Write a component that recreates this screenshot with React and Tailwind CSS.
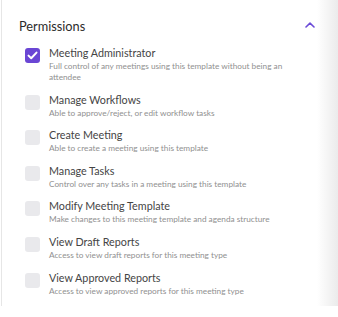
import React from "react";

const items = [
  { title: "Meeting Administrator", desc: "Full control of any meetings using this template without being an attendee", checked: true },
  { title: "Manage Workflows", desc: "Able to approve/reject, or edit workflow tasks" },
  { title: "Create Meeting", desc: "Able to create a meeting using this template" },
  { title: "Manage Tasks", desc: "Control over any tasks in a meeting using this template" },
  { title: "Modify Meeting Template", desc: "Make changes to this meeting template and agenda structure" },
  { title: "View Draft Reports", desc: "Access to view draft reports for this meeting type" },
  { title: "View Approved Reports", desc: "Access to view approved reports for this meeting type" },
];

export default function App() {
  return (
    <div className="w-[338px] h-[317px] bg-white" style={{ fontFamily: "Lato, 'Open Sans', sans-serif" }}>
      <div className="flex h-[306px]">
        <div className="ml-px w-[316px] border-l border-[#e6e6e6] flex flex-col">
          <div className="flex items-center justify-between pl-[17px] pr-[2px] pt-[16px] h-[36px]">
            <span className="text-[12.75px] leading-5 text-[#2b2b2b]">Permissions</span>
            <svg width="10" height="6" viewBox="0 0 10 6" className="mt-[-2px]">
              <path d="M1 5 L5 1.2 L9 5" fill="none" stroke="#6b4bd8" strokeWidth="1.6" strokeLinecap="round" strokeLinejoin="round" />
            </svg>
          </div>
          <div className="flex flex-col gap-[8.6px] pl-[23px] pt-[9px] pr-[30px]">
            {items.map((it) => (
              <div key={it.title} className="flex items-start gap-[9px]">
                <div
                  className={
                    "mt-[3px] w-[15px] h-[15px] rounded-[3px] shrink-0 flex items-center justify-center " +
                    (it.checked ? "bg-[#6a46d4]" : "bg-[#e9e9ec]")
                  }
                >
                  {it.checked && (
                    <svg width="11" height="9" viewBox="0 0 11 9">
                      <path d="M1.5 4.6 L4.2 7.2 L9.5 1.6" fill="none" stroke="white" strokeWidth="2" strokeLinecap="round" strokeLinejoin="round" />
                    </svg>
                  )}
                </div>
                <div className="flex flex-col">
                  <span className="text-[10.75px] leading-4 text-[#444]">{it.title}</span>
                  <span className="text-[8.25px] leading-[11px] text-[#909090]">{it.desc}</span>
                </div>
              </div>
            ))}
          </div>
        </div>
        <div className="flex-1 bg-gradient-to-r from-white to-[#ebebeb]" />
      </div>
    </div>
  );
}
